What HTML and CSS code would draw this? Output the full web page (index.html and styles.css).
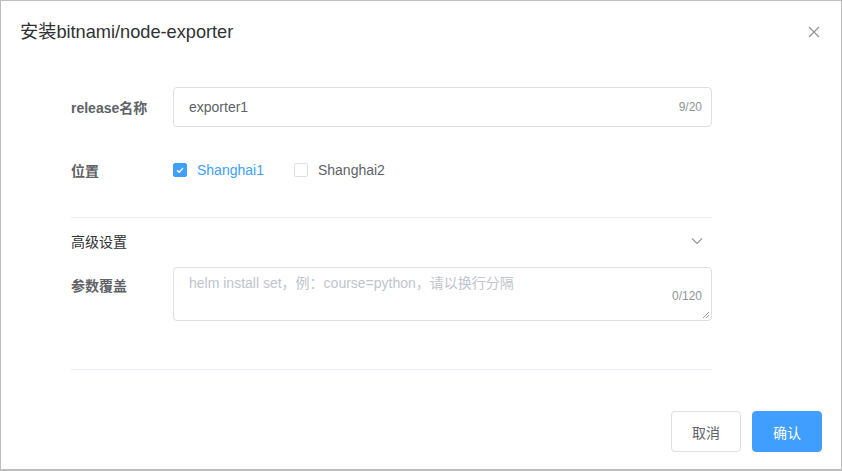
FILE: index.html
```html
<!DOCTYPE html>
<html lang="zh">
<head>
<meta charset="utf-8">
<title>安装bitnami/node-exporter</title>
<link rel="stylesheet" href="styles.css">
</head>
<body>
<div class="dialog">
  <div class="dialog-header">
    <span class="dialog-title">安装bitnami/node-exporter</span>
    <button class="close-btn" aria-label="close">
      <svg width="12" height="12" viewBox="0 0 12 12"><path d="M1 1 L11 11 M11 1 L1 11" stroke="#909399" stroke-width="1.2" fill="none"/></svg>
    </button>
  </div>
  <div class="dialog-body">
    <div class="form-item first">
      <label class="form-label bold">release名称</label>
      <div class="form-content">
        <div class="input">
          <span class="input-value">exporter1</span>
          <span class="count">9/20</span>
        </div>
      </div>
    </div>
    <div class="form-item">
      <label class="form-label bold">位置</label>
      <div class="form-content checks">
        <span class="check checked">
          <span class="box"><svg width="14" height="14" viewBox="0 0 14 14"><path d="M4 7.2 L6.2 9.3 L10 5" stroke="#fff" stroke-width="1.3" fill="none"/></svg></span>
          <span class="check-label">Shanghai1</span>
        </span>
        <span class="check">
          <span class="box"></span>
          <span class="check-label">Shanghai2</span>
        </span>
      </div>
    </div>
    <div class="divider"></div>
    <div class="collapse-head">
      <span>高级设置</span>
      <svg width="12" height="8" viewBox="0 0 12 8"><path d="M1 1.5 L6 6.5 L11 1.5" stroke="#909399" stroke-width="1.1" fill="none"/></svg>
    </div>
    <div class="form-item textarea-item">
      <label class="form-label bold">参数覆盖</label>
      <div class="form-content">
        <div class="textarea">
          <span class="placeholder">helm install set，例：course=python，请以换行分隔</span>
          <span class="count count-ta">0/120</span>
          <svg class="resize" width="8" height="8" viewBox="0 0 8 8"><path d="M7 1 L1 7 M7 4 L4 7" stroke="#888" stroke-width="0.8" fill="none"/></svg>
        </div>
      </div>
    </div>
    <div class="divider bottom"></div>
  </div>
  <div class="dialog-footer">
    <button class="btn">取消</button>
    <button class="btn primary">确认</button>
  </div>
</div>
</body>
</html>
```

FILE: styles.css
```css
* { box-sizing: border-box; }
html, body { margin: 0; padding: 0; background: #fff; }
body {
  font-family: "Liberation Sans", "Noto Sans CJK SC", sans-serif;
  width: 842px;
  height: 471px;
  overflow: hidden;
}
.dialog {
  width: 842px;
  height: 471px;
  border: 1px solid #bdbdbd;
  border-bottom-width: 2px;
  background: #fff;
  display: flex;
  flex-direction: column;
}
.dialog-header {
  padding: 19px 20px 10px 19px;
  display: flex;
  justify-content: space-between;
  align-items: center;
  height: 53px;
}
.dialog-title {
  font-size: 18.2px;
  line-height: 24px;
  color: #303133;
}
.close-btn {
  border: none;
  background: none;
  padding: 0;
  margin-right: 1px;
  width: 12px;
  height: 12px;
  display: flex;
}
.dialog-body {
  padding: 33px 129px 0 70px;
  flex: 1;
}
.form-item {
  display: flex;
  align-items: center;
  height: 40px;
  margin-bottom: 23px;
}
.form-label {
  width: 102px;
  flex: none;
  font-size: 14px;
  color: #606266;
}
.form-label.bold { font-weight: bold; }
.form-content { flex: 1; }
.input {
  position: relative;
  height: 40px;
  border: 1px solid #dcdfe6;
  border-radius: 4px;
  display: flex;
  align-items: center;
  padding: 0 15px;
  font-size: 14px;
  color: #606266;
}
.count {
  position: absolute;
  right: 9px;
  font-size: 12px;
  color: #909399;
}
.checks { display: flex; align-items: center; }
.check {
  display: inline-flex;
  align-items: center;
  margin-right: 30px;
  font-size: 14px;
  color: #606266;
}
.box {
  width: 14px;
  height: 14px;
  border: 1px solid #dcdfe6;
  border-radius: 2px;
  background: #fff;
  display: inline-flex;
  margin-right: 10px;
}
.check.checked .box {
  background: #409eff;
  border-color: #409eff;
}
.check.checked .box svg { margin: -1px; }
.check.checked .check-label { color: #409eff; }
.divider {
  height: 1px;
  background: #ebeef5;
  margin-top: 27px;
}
.collapse-head {
  display: flex;
  justify-content: space-between;
  align-items: center;
  height: 49px;
  padding-bottom: 3px;
  font-size: 14px;
  color: #303133;
  padding-right: 9px;
}
.textarea-item {
  align-items: flex-start;
  height: 54px;
  margin-bottom: 0;
}
.textarea-item .form-label { padding-top: 8px; }
.textarea {
  position: relative;
  height: 54px;
  border: 1px solid #dcdfe6;
  border-radius: 4px;
  padding: 5px 15px;
  font-size: 14px;
  line-height: 21px;
}
.placeholder { color: #c0c4cc; }
.count-ta {
  bottom: 16px;
  line-height: 16px;
}
.resize {
  position: absolute;
  right: 1px;
  bottom: 1px;
}
.divider.bottom { margin-top: 48px; }
.dialog-footer {
  display: flex;
  justify-content: flex-end;
  gap: 11px;
  padding: 0 19px 17px 0;
}
.btn {
  width: 70px;
  height: 41px;
  border: 1px solid #dcdfe6;
  border-radius: 4px;
  background: #fff;
  color: #606266;
  font-family: inherit;
  font-size: 14px;
  padding: 0;
}
.btn.primary {
  background: #409eff;
  border-color: #409eff;
  color: #fff;
}
```
